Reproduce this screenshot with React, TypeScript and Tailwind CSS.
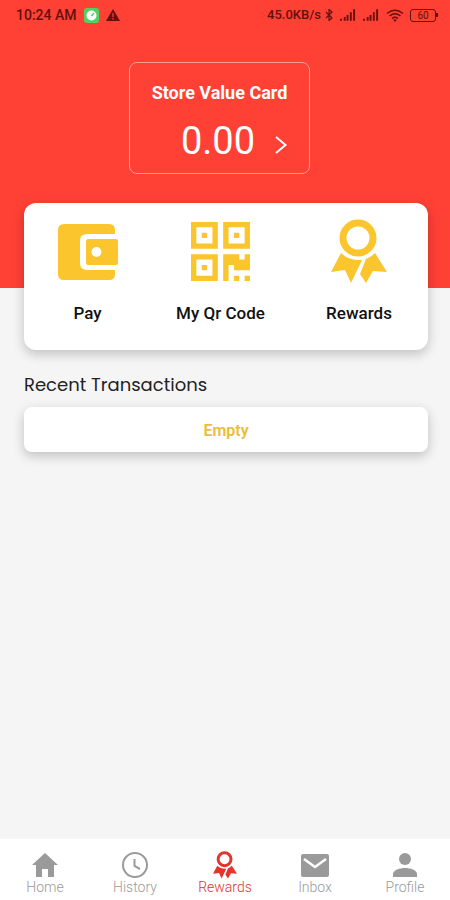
import type { ReactNode } from "react";

function MedalIcon({ className }: { className: string }) {
  return (
    <svg viewBox="0 0 56 65" className={className} fill="currentColor" aria-hidden="true">
      <circle cx="27" cy="19" r="15" fill="none" stroke="currentColor" strokeWidth="7" />
      <path d="M10 34Q18 42 31 41L20 64L14 51L0 53Z" />
      <path d="M35 40Q40 38 44 34L56 53L42 52L35 64L29 55Z" />
    </svg>
  );
}

function WalletIcon() {
  return (
    <svg viewBox="0 0 60 56" className="h-14 w-15" fill="currentColor" aria-hidden="true">
      <path d="M6 0H51Q57 0 57 6V10H29Q22 10 22 17V39Q22 46 29 46H57V50Q57 56 51 56H6Q0 56 0 50V6Q0 0 6 0Z" />
      <path
        fillRule="evenodd"
        d="M30 15H58Q60 15 60 17V39Q60 41 58 41H30Q28 41 28 39V17Q28 15 30 15ZM38.500 23A5 5 0 1 0 38.500 33A5 5 0 1 0 38.500 23Z"
      />
    </svg>
  );
}

function QrIcon() {
  return (
    <svg viewBox="0 0 11 11" className="size-[59px]" fill="currentColor" aria-hidden="true">
      <path
        fillRule="evenodd"
        d="M0 0H5V5H0ZM1 1V4H4V1ZM6 0H11V5H6ZM7 1V4H10V1ZM0 6H5V11H0ZM1 7V10H4V7Z"
      />
      <path d="M2 2H3V3H2ZM8 2H9V3H8ZM2 8H3V9H2ZM6 6H9V7H10V6H11V9H8V8H7V11H6ZM8 10H9V11H8ZM10 10H11V11H10Z" />
    </svg>
  );
}

function Signal() {
  return (
    <svg viewBox="0 0 17 12" className="h-3 w-4" fill="currentColor" aria-hidden="true">
      <path d="M0 10H2V12H0ZM4 8H6V12H4ZM7 6H9V12H7ZM10.500 3H12.500V12H10.500ZM14 0H16V12H14Z" />
    </svg>
  );
}

function StatusBar() {
  return (
    <div className="flex h-[30px] items-center justify-between pr-3 pl-4 text-[#64100c]">
      <div className="flex items-center gap-[7px]">
        <span className="text-[14px] leading-5 font-medium">10:24 AM</span>
        <svg viewBox="0 0 15 15" className="size-[15px]" aria-hidden="true">
          <rect width="15" height="15" rx="3" fill="#56cf62" />
          <circle cx="7.500" cy="7.500" r="5" fill="#fff" />
          <path d="M7.500 8L10 5" stroke="#56cf62" strokeWidth="1.500" />
        </svg>
        <svg viewBox="0 0 14 12" className="h-3 w-[14px]" aria-hidden="true">
          <path d="M7 0L14 12H0Z" fill="currentColor" />
          <path d="M7 4V8M7 9V10.500" stroke="#ff4035" strokeWidth="1.300" />
        </svg>
      </div>
      <div className="flex items-center gap-1">
        <span className="text-[13px] leading-5 font-medium">45.0KB/s</span>
        <svg viewBox="0 0 8 12" className="h-3 w-2" fill="none" stroke="currentColor" strokeWidth="1.200" aria-hidden="true">
          <path d="M1 3L7 9L4 11.500V.5L7 3L1 9" />
        </svg>
        <div className="flex gap-[7px] pl-[3px]">
          <Signal />
          <Signal />
        </div>
        <svg viewBox="0 0 18 13" className="ml-[3px] h-[13px] w-[18px]" fill="none" stroke="currentColor" strokeWidth="1.500" aria-hidden="true">
          <path d="M1 4.500Q9 -2 17 4.500M3.500 7Q9 2.500 14.500 7M6 9.500Q9 7 12 9.500" />
          <path d="M7 10.500H11L9 13Z" fill="currentColor" stroke="none" />
        </svg>
        <div className="ml-[2px] flex items-center">
          <span className="flex h-[13px] w-[26px] items-center justify-center rounded-[3px] border border-current text-[10px]">
            60
          </span>
          <span className="h-1 w-[2px] bg-current" />
        </div>
      </div>
    </div>
  );
}

function Action({ label, children }: { label: string; children: ReactNode }) {
  return (
    <button type="button" className="flex flex-col items-center gap-[17px]">
      <span className="flex h-[65px] items-center justify-center text-[#fbc52d]">{children}</span>
      <span className="text-[17px] leading-6 font-medium text-[#111]">{label}</span>
    </button>
  );
}

function NavItem({ label, active, children }: { label: string; active?: boolean; children: ReactNode }) {
  return (
    <a
      href="#"
      aria-current={active ? "page" : undefined}
      className={
        active
          ? "flex flex-1 flex-col items-center text-[#e3352b]"
          : "flex flex-1 flex-col items-center text-[#9a9a9a]"
      }
    >
      <span className="flex h-7 items-center">{children}</span>
      <span className="text-[14px] leading-4 font-light">{label}</span>
    </a>
  );
}

export default function App() {
  return (
    <div className="flex min-h-screen flex-col bg-[#f5f5f5] font-[Roboto,sans-serif]">
      <header className="bg-[#ff4035] pb-[114px]">
        <StatusBar />
        <div className="flex justify-center pt-8 pr-[11px]">
          <button
            type="button"
            className="flex h-28 w-[181px] flex-col rounded-lg border border-[#ff9a92] pt-[18px] text-white"
          >
            <span className="w-full text-center text-[18px] leading-6 font-bold">Store Value Card</span>
            <span className="mt-3 flex w-full items-center justify-end gap-5 pr-[22px]">
              <span className="text-[38px] leading-12">0.00</span>
              <svg viewBox="0 0 12 18" className="mt-2 h-[18px] w-3" fill="none" stroke="currentColor" strokeWidth="2" aria-hidden="true">
                <path d="M1 1L10.500 9L1 17" />
              </svg>
            </span>
          </button>
        </div>
      </header>

      <main className="-mt-[85px] flex-1 pr-[22px] pl-6">
        <section className="grid grid-cols-[127px_1fr_138px] rounded-xl bg-white pt-4 pb-[25px] shadow-[0_4px_12px_rgba(0,0,0,0.22)]">
          <Action label="Pay">
            <WalletIcon />
          </Action>
          <Action label="My Qr Code">
            <QrIcon />
          </Action>
          <Action label="Rewards">
            <MedalIcon className="h-[65px] w-14" />
          </Action>
        </section>

        <h2 className="mt-[23px] font-[Poppins,Inter,sans-serif] text-[18px] leading-6 text-[#222]">Recent Transactions</h2>
        <p className="mt-[10px] rounded-lg bg-white pt-3 pb-[9px] text-center text-[16px] leading-6 font-semibold text-[#edbd38] shadow-[0_4px_12px_rgba(0,0,0,0.22)]">
          Empty
        </p>
      </main>

      <nav className="flex bg-white pt-3 pb-[5px]">
        <NavItem label="Home">
          <svg viewBox="0 0 26 24" className="h-6 w-[26px]" fill="currentColor" aria-hidden="true">
            <path d="M13 0L26 12H22V24H16V16H10V24H4V12H0Z" />
          </svg>
        </NavItem>
        <NavItem label="History">
          <svg viewBox="0 0 26 26" className="size-[26px]" fill="none" stroke="currentColor" strokeWidth="2" aria-hidden="true">
            <circle cx="13" cy="13" r="12" />
            <path d="M12.500 7V14L18 17" />
          </svg>
        </NavItem>
        <NavItem label="Rewards" active>
          <MedalIcon className="h-7 w-6" />
        </NavItem>
        <NavItem label="Inbox">
          <svg viewBox="0 0 28 23" className="h-[23px] w-7" aria-hidden="true">
            <rect width="28" height="23" rx="2" fill="currentColor" />
            <path d="M3 5L14 13L25 5" fill="none" stroke="#fff" strokeWidth="2.500" />
          </svg>
        </NavItem>
        <NavItem label="Profile">
          <svg viewBox="0 0 24 24" className="size-6" fill="currentColor" aria-hidden="true">
            <circle cx="12" cy="6" r="6" />
            <path d="M0 24V21C0 17 7 15 12 15S24 17 24 21V24Z" />
          </svg>
        </NavItem>
      </nav>
    </div>
  );
}
